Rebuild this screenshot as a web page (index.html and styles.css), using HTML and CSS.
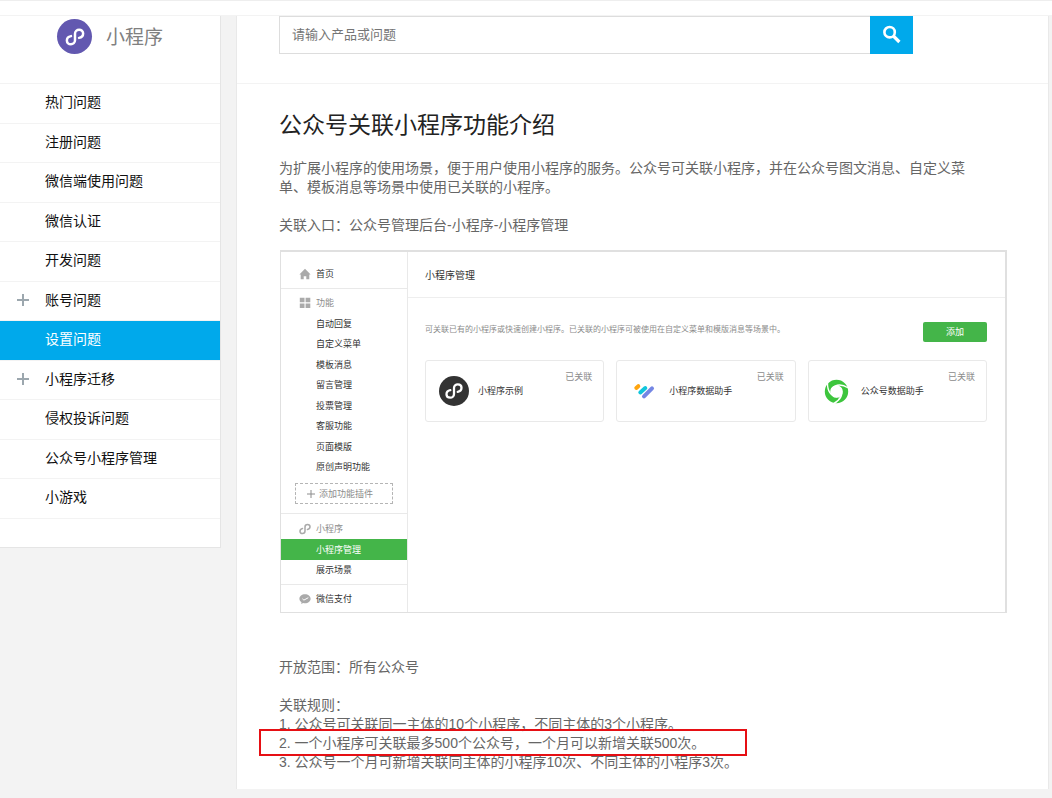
FILE: index.html
```html
<!DOCTYPE html>
<html lang="zh-CN">
<head>
<meta charset="utf-8">
<title>公众号关联小程序功能介绍</title>
<link rel="stylesheet" href="styles.css">
</head>
<body>
<svg class="sprite" aria-hidden="true">
  <symbol id="mini" viewBox="0 0 24 24"><path d="M8.300 11.200C6 11.600 4.500 13 4.500 15.200c0 2.200 1.700 3.500 3.700 3.500s3.800-1.500 3.800-3.700V9c0-2.200 1.800-3.700 3.800-3.700s3.700 1.300 3.700 3.500-1.500 3.600-3.800 4" fill="none" stroke="currentColor" stroke-width="2.300" stroke-linecap="round"/></symbol>
</svg>
<div class="topbar"></div>
<div class="layout">
  <aside class="sidebar">
    <div class="brand">
      <span class="brand-icon"><svg viewBox="0 0 24 24"><use href="#mini"/></svg></span>
      <span class="brand-name">小程序</span>
    </div>
    <nav>
      <ul class="menu">
        <li><a href="#">热门问题</a></li>
        <li><a href="#">注册问题</a></li>
        <li><a href="#">微信端使用问题</a></li>
        <li><a href="#">微信认证</a></li>
        <li><a href="#">开发问题</a></li>
        <li class="expandable"><a href="#">账号问题</a></li>
        <li class="active"><a href="#">设置问题</a></li>
        <li class="expandable"><a href="#">小程序迁移</a></li>
        <li><a href="#">侵权投诉问题</a></li>
        <li><a href="#">公众号小程序管理</a></li>
        <li><a href="#">小游戏</a></li>
      </ul>
    </nav>
  </aside>
  <main class="main">
    <form class="search">
      <input class="search-input" type="text" placeholder="请输入产品或问题" aria-label="搜索">
      <button class="search-button" type="button" aria-label="搜索">
        <svg viewBox="0 0 20 20"><circle cx="7.6" cy="7.2" r="5.2" fill="none" stroke="currentColor" stroke-width="2.6"/><path d="M11.4 11l6 6" stroke="currentColor" stroke-width="3.2"/></svg>
      </button>
    </form>
    <article class="article">
      <h1>公众号关联小程序功能介绍</h1>
      <p>为扩展小程序的使用场景，便于用户使用小程序的服务。公众号可关联小程序，并在公众号图文消息、自定义菜<br>单、模板消息等场景中使用已关联的小程序。</p>
      <p>关联入口：公众号管理后台-小程序-小程序管理</p>
      <section class="console">
        <div class="console-side">
          <div class="group home">
            <div class="item"><svg viewBox="0 0 12 12"><path d="M6 .8L.4 6.4h1.3v4.9h3V8.2h2.6v3.1h3V6.4h1.3z" fill="currentColor"/></svg>首页</div>
          </div>
          <div class="group features">
            <div class="item muted"><svg viewBox="0 0 12 12"><path d="M.8.8h4.7v4.5H.8zM6.6.8h4.7v4.5H6.6zM.8 6.6h4.7v4.5H.8zM6.6 6.6h4.7v4.5H6.6z" fill="currentColor"/></svg>功能</div>
            <div class="item">自动回复</div>
            <div class="item">自定义菜单</div>
            <div class="item">模板消息</div>
            <div class="item">留言管理</div>
            <div class="item">投票管理</div>
            <div class="item">客服功能</div>
            <div class="item">页面模版</div>
            <div class="item">原创声明功能</div>
            <button class="plugin" type="button"><svg viewBox="0 0 8 8"><path d="M4 0v8M0 4h8" stroke="currentColor"/></svg>添加功能插件</button>
          </div>
          <div class="group">
            <div class="item muted"><svg class="mini" viewBox="0 0 24 24"><use href="#mini"/></svg>小程序</div>
            <div class="item selected">小程序管理</div>
            <div class="item">展示场景</div>
          </div>
          <div class="group pay">
            <div class="item"><svg viewBox="0 0 12 12"><path d="M6 1.2C2.900 1.200.4 3.200.4 5.700c0 1.500.8 2.700 2.100 3.500l-.3 1.700 1.900-1c.6.2 1.200.3 1.900.3 3.100 0 5.600-2 5.600-4.500S9.100 1.200 6 1.200z" fill="currentColor"/><path d="M3.400 5.800l1.500 1.300 4.400-2.400" fill="none" stroke="#fff"/></svg>微信支付</div>
          </div>
        </div>
        <div class="console-main">
          <h2>小程序管理</h2>
          <div class="intro">
            <span>可关联已有的小程序或快速创建小程序。已关联的小程序可被使用在自定义菜单和模版消息等场景中。</span>
            <button class="add" type="button">添加</button>
          </div>
          <div class="cards">
            <div class="card">
              <svg viewBox="0 0 30 30"><circle cx="15" cy="15" r="15" fill="#333"/><svg x="3" y="3" width="24" height="24" color="#fff"><use href="#mini"/></svg></svg>
              <span class="name">小程序示例</span><span class="tag">已关联</span>
            </div>
            <div class="card">
              <svg viewBox="0 0 30 30" fill="none" stroke-width="4" stroke-linecap="round"><path d="M6.300 12l2-1.800" stroke="#ffa50f"/><path d="M10.300 16.500l5-4.500" stroke="#10c6dd"/><path d="M14 20.300l8-8" stroke="#7486e4"/></svg>
              <span class="name">小程序数据助手</span><span class="tag">已关联</span>
            </div>
            <div class="card">
              <svg viewBox="0 0 30 30" fill="none"><circle cx="14.500" cy="15.500" r="9" stroke="#3dc53d" stroke-width="5.400"/><path id="slit" d="M9.500 13.500C13 8.800 19 7.600 26.500 12" stroke="#fff" stroke-width="1.400"/><use href="#slit" transform="rotate(120 14.500 15.500)"/><use href="#slit" transform="rotate(240 14.500 15.500)"/></svg>
              <span class="name">公众号数据助手</span><span class="tag">已关联</span>
            </div>
          </div>
        </div>
      </section>
      <p>开放范围：所有公众号</p>
      <div class="rules">
        <div>关联规则：</div>
        <div>1. 公众号可关联同一主体的10个小程序，不同主体的3个小程序。</div>
        <div class="marked">2. 一个小程序可关联最多500个公众号，一个月可以新增关联500次。</div>
        <div>3. 公众号一个月可新增关联同主体的小程序10次、不同主体的小程序3次。</div>
      </div>
    </article>
  </main>
</div>
</body>
</html>
```
FILE: styles.css
```css
*, *::before, *::after { box-sizing: border-box; }

body {
  margin: 0;
  background: #f3f3f3;
  color: #666;
  font: 14px/20px "Liberation Sans", "Noto Sans CJK SC", sans-serif;
}

button, input { font: inherit; }
.sprite { display: none; }

.topbar {
  height: 16px;
  background: #fff;
  border-top: 1px solid #eee;
  border-bottom: 1px solid #f3f3f3;
}

.layout {
  display: flex;
  align-items: flex-start;
  gap: 15px;
  padding: 0 3px 9px 0;
}

.sidebar {
  flex: none;
  width: 221px;
  padding-bottom: 28px;
  background: #fff;
  border: solid #e5e5e5;
  border-width: 0 1px 1px 0;
}

.brand {
  display: flex;
  align-items: flex-start;
  gap: 14px;
  height: 68px;
  padding: 3px 0 0 57px;
  border-bottom: 1px solid #f3f3f3;
}

.brand-icon {
  display: flex;
  align-items: center;
  justify-content: center;
  width: 35px;
  height: 35px;
  border-radius: 50%;
  background: #6258b0;
  color: #fff;
}

.brand-icon svg { width: 26px; height: 26px; }
.brand-name { color: #808080; font-size: 19px; line-height: 38px; }

.menu { margin: 0; padding: 0; list-style: none; }

.menu li {
  position: relative;
  height: 39px;
  border-bottom: 1px solid #f3f3f3;
}

.menu li:nth-child(odd) { height: 40px; }

.menu a {
  display: flex;
  align-items: center;
  height: 100%;
  padding: 0 0 3px 45px;
  color: #111;
  text-decoration: none;
}

.menu .active a { background: #00a9eb; color: #fff; }

.expandable::before,
.expandable::after {
  content: "";
  position: absolute;
  left: 17px;
  top: 17px;
  width: 12px;
  height: 2px;
  background: #9ca7ae;
}

.expandable::after { transform: rotate(90deg); }

.main {
  flex: 1;
  min-width: 0;
  background: #fff;
  border: solid #e9e9e9;
  border-width: 0 1px;
}

.search {
  display: flex;
  height: 68px;
  padding: 0 135px 29px 42px;
  border-bottom: 1px solid #f3f3f3;
}

.search-input {
  flex: 1;
  min-width: 0;
  padding: 0 12px;
  border: 1px solid #ddd;
  border-right: 0;
  border-radius: 0;
  font-size: 13px;
}

.search-input::placeholder { color: #757575; }

.search-button {
  display: flex;
  align-items: center;
  justify-content: center;
  width: 43px;
  padding: 0;
  border: 0;
  background: #00a9eb;
  color: #fff;
}

.search-button svg { width: 20px; height: 20px; }

.article { padding: 25px 41px 17px 42px; }

h1 {
  margin: 0 0 18px;
  color: #222;
  font-size: 23px;
  font-weight: 400;
  line-height: 32px;
}

.article p { margin: 0 0 19px; line-height: 19px; }

.article .console {
  display: flex;
  margin: -4px 0 45px 1px;
  border: 1px solid #e0e0e0;
  border-width: 2px 2px 1px 1px;
  color: #333;
  font-size: 9px;
}

.console-side {
  flex: none;
  width: 127px;
  border-right: 1px solid #e9e9e9;
}

.group { padding: 4px 0; }
.group + .group { border-top: 1px solid #e9e9e9; }
.group.home { padding: 11px 0 4px; }
.group.features { padding: 3px 0 9px; }
.group.pay { padding: 3px 0; }

.item {
  display: flex;
  align-items: center;
  height: 21px;
  padding-left: 35px;
}

.item:nth-child(odd):not(:first-child) { height: 20px; }

.item svg {
  width: 12px;
  height: 12px;
  margin: 0 5px 0 -17px;
  color: #aaa;
}

.item svg.mini {
  width: 16px;
  height: 16px;
  margin: 0 3px 0 -19px;
}

.muted { color: #8c8c8c; }
.selected { background: #44b549; color: #fff; }

.plugin {
  display: flex;
  align-items: center;
  justify-content: center;
  gap: 4px;
  width: 98px;
  height: 21px;
  margin: 6px 0 0 14px;
  padding: 0 8px 0 0;
  border: 1px dashed #b5b5b5;
  background: #fff;
  color: #8c8c8c;
}

.plugin svg { width: 8px; height: 8px; }

.console-main { flex: 1; min-width: 0; }

h2 {
  margin: 0;
  padding: 14px 17px 11px;
  border-bottom: 1px solid #eee;
  font-size: 10px;
  font-weight: 400;
  line-height: 20px;
}

.intro {
  display: flex;
  align-items: flex-start;
  justify-content: space-between;
  padding: 24px 18px 18px 17px;
  color: #8c8c8c;
  font-size: 8px;
  line-height: 16px;
}

.add {
  width: 64px;
  height: 20px;
  padding: 0;
  border: 0;
  border-radius: 2px;
  background: #44b549;
  color: #fff;
  font-size: 9px;
}

.cards {
  display: grid;
  grid-template-columns: repeat(3, 1fr);
  gap: 12px;
  padding: 0 18px 0 17px;
}

.card {
  display: flex;
  align-items: center;
  height: 62px;
  padding: 0 11px 0 13px;
  border: 1px solid #e9e9e9;
  border-radius: 3px;
}

.card > svg { flex: none; width: 30px; height: 30px; margin-right: 9px; }
.name { flex: 1; white-space: nowrap; }
.tag { align-self: flex-start; padding-top: 6px; color: #8c8c8c; }

.rules { line-height: 19px; }

.marked { position: relative; }

.marked::after {
  content: "";
  position: absolute;
  left: -20px;
  top: -5px;
  width: 488px;
  height: 27px;
  border: 2px solid #e60f14;
}
```
